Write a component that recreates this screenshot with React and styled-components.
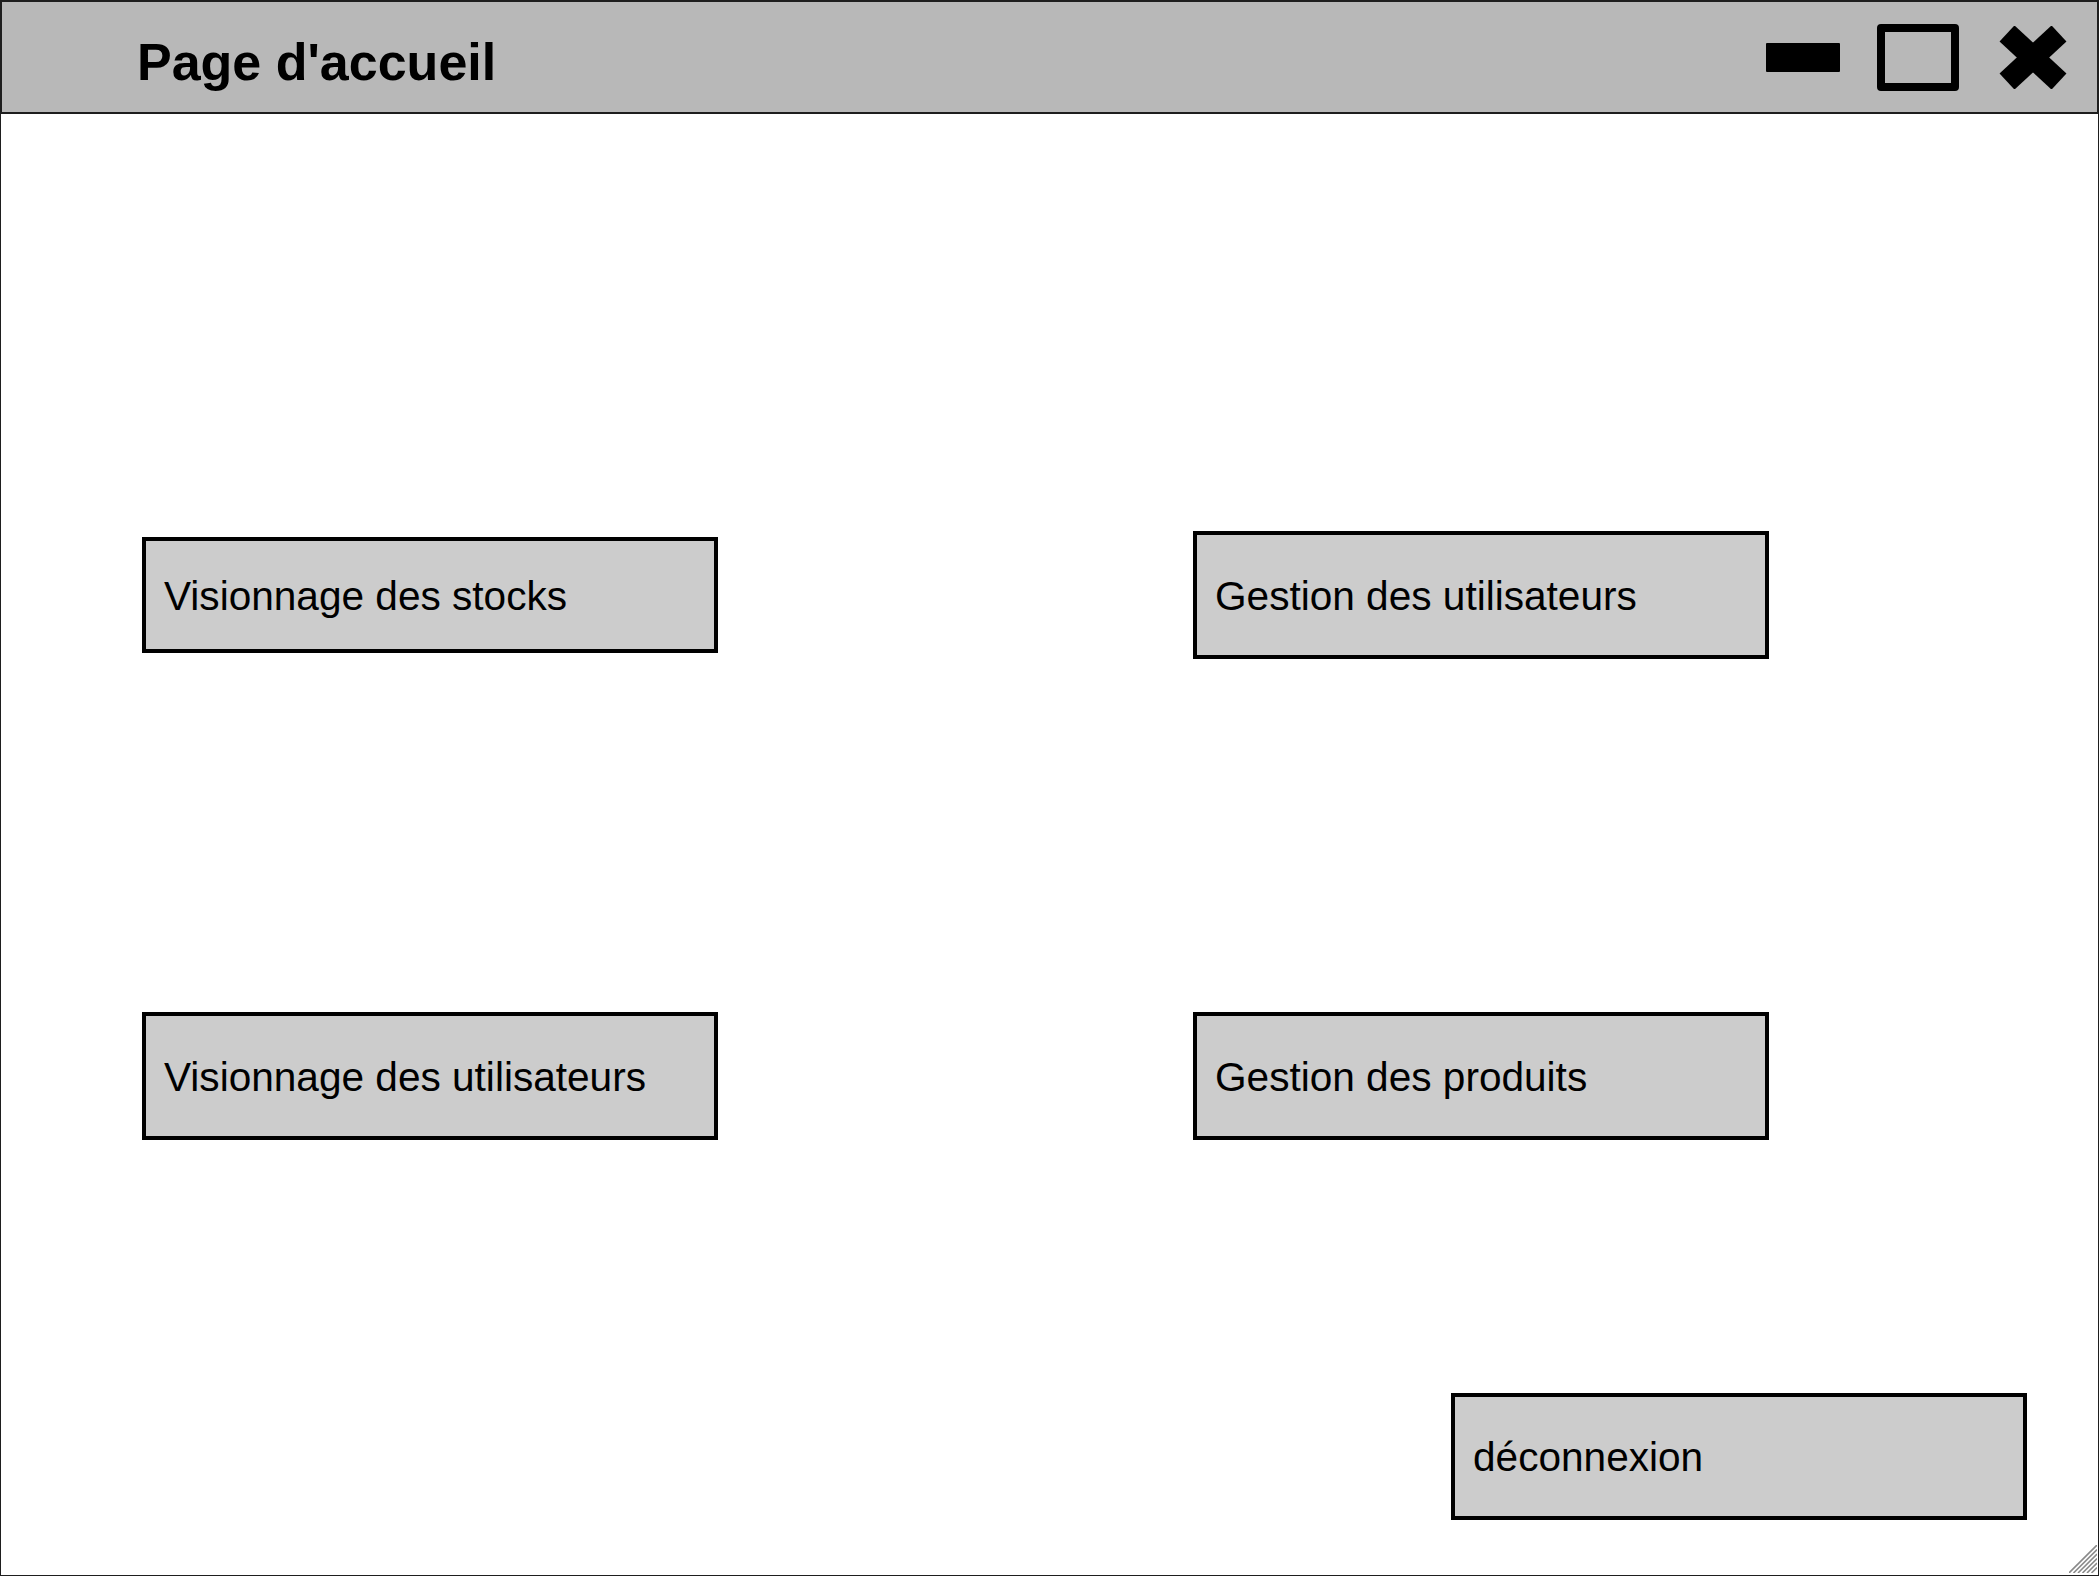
import React from 'react'
import styled, { createGlobalStyle } from 'styled-components'

const GlobalStyle = createGlobalStyle`
    html, body {
        margin: 0;
        padding: 0;
        background: #ffffff;
    }
    * {
        box-sizing: border-box;
    }
`

const Window = styled.div`
    width: 2099px;
    height: 1576px;
    display: flex;
    flex-direction: column;
    font-family: "Liberation Sans", Arial, sans-serif;
    color: #000;
`

const TitleBar = styled.div`
    height: 114px;
    flex-shrink: 0;
    display: flex;
    align-items: center;
    justify-content: space-between;
    padding: 0 30px 0 135px;
    background-color: #b8b8b8;
    border: 2px solid #1e1e1e;
`

const Title = styled.h1`
    margin: 10px 0 0 0;
    font-size: 52px;
    font-weight: 700;
`

const Controls = styled.div`
    display: flex;
    align-items: center;
`

const Minimize = styled.div`
    width: 74px;
    height: 29px;
    border-radius: 1px;
    background-color: #000;
    margin-right: 37px;
`

const Maximize = styled.div`
    width: 82px;
    height: 67px;
    border: 8px solid #000;
    border-radius: 4px;
    margin-right: 40px;
`

const Content = styled.div`
    flex: 1;
    position: relative;
    display: flex;
    flex-direction: column;
    padding: 417px 71px 0 141px;
    border: 1px solid #1e1e1e;
    border-top: none;
`

const Grid = styled.div`
    display: grid;
    grid-template-columns: 576px 576px;
    grid-auto-rows: 128px;
    column-gap: 475px;
    row-gap: 353px;
    align-items: center;
`

const Button = styled.div`
    width: 576px;
    height: ${props => props.$height || 128}px;
    display: flex;
    align-items: center;
    padding: 2px 0 0 18px;
    background-color: #cccccc;
    border: 4px solid #000;
    font-size: 40.6px;
    cursor: pointer;
`

const Logout = styled(Button)`
    align-self: flex-end;
    margin-top: 253px;
    height: 127px;
`

const Grip = styled.svg`
    position: absolute;
    right: 1px;
    bottom: 2px;
`

const CloseIcon = () => (
    <svg width="68" height="63" viewBox="0 0 68 63">
        <line x1="8" y1="7.5" x2="60" y2="55.5" stroke="#000" strokeWidth="22" />
        <line x1="60" y1="7.5" x2="8" y2="55.5" stroke="#000" strokeWidth="22" />
    </svg>
)

const ResizeGrip = () => (
    <Grip width="28" height="28" viewBox="0 0 28 28">
        {[0, 4.5, 9, 13.5, 18, 22.5].map(t => (
            <line key={t} x1={t} y1="28" x2="28" y2={t} stroke="#8a8a8a" strokeWidth="1.6" />
        ))}
    </Grip>
)

const App = () => {
    return (
        <Window>
            <GlobalStyle />
            <TitleBar>
                <Title>Page d'accueil</Title>
                <Controls>
                    <Minimize />
                    <Maximize />
                    <CloseIcon />
                </Controls>
            </TitleBar>
            <Content>
                <Grid>
                    <Button $height={116}>Visionnage des stocks</Button>
                    <Button>Gestion des utilisateurs</Button>
                    <Button>Visionnage des utilisateurs</Button>
                    <Button>Gestion des produits</Button>
                </Grid>
                <Logout>déconnexion</Logout>
                <ResizeGrip />
            </Content>
        </Window>
    )
}

export default App
